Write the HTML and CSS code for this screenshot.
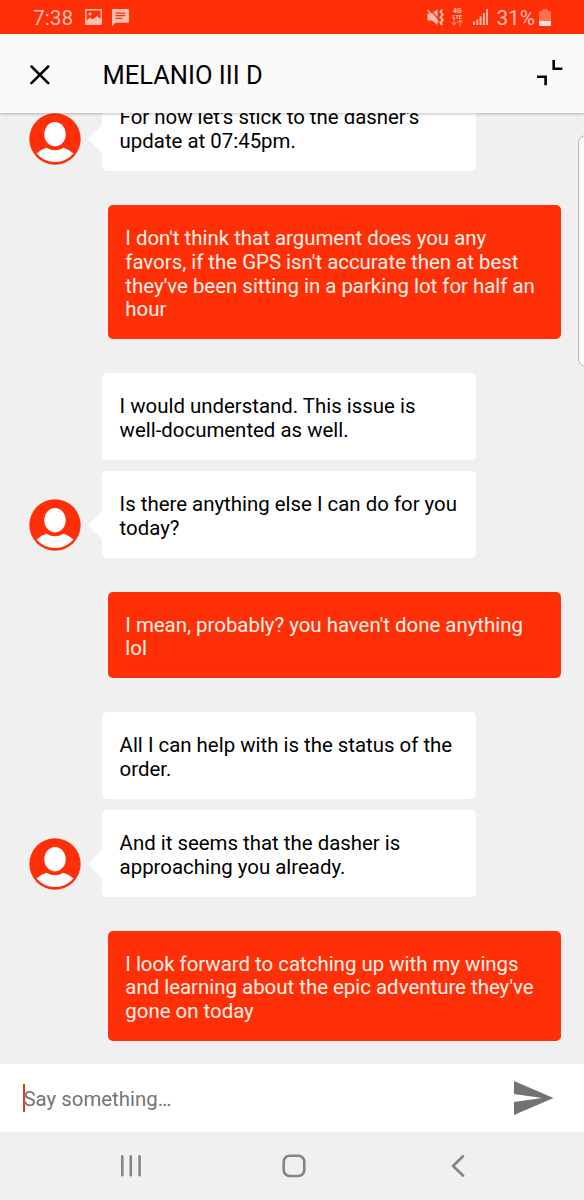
FILE: index.html
```html
<!DOCTYPE html>
<html lang="en">
<head>
    <meta charset="UTF-8">
    <meta name="viewport" content="width=device-width, initial-scale=1.0">
    <title>Support Chat</title>
    <link rel="stylesheet" href="styles.css">
</head>
<body>

    <!-- Avatar shared by the agent messages -->
    <svg class="defs" width="0" height="0">
        <symbol id="avatar" viewBox="0 0 52 52">
            <circle cx="26" cy="26" r="25.7" fill="#ff3008"/>
            <ellipse cx="26" cy="21.2" rx="10.7" ry="12.2" fill="#fff"/>
            <path d="M7.5 40.5Q12 36.5 17.5 34.8Q26 39.8 34.5 34.8Q40 36.5 44.5 40.5Q37 49 26 49Q15 49 7.5 40.5Z" fill="#fff"/>
        </symbol>
    </svg>

    <div class="phone">
        <div class="status-bar">
            <span class="clock">7:38</span>
            <svg class="status-icon" width="17" height="16" viewBox="0 0 17 16">
                <path fill-rule="evenodd" d="M1 0H16Q17 0 17 1V15Q17 16 16 16H1Q0 16 0 15V1Q0 0 1 0ZM1.5 1.5V11.5L5 8.5L7.5 10.5L12 7L15.5 10V1.5ZM3.5 5A1.5 1.5 0 1 0 6.5 5A1.5 1.5 0 1 0 3.5 5Z"/>
            </svg>
            <svg class="status-icon message" width="17" height="17" viewBox="0 0 17 17">
                <path fill-rule="evenodd" d="M1.2 0H15.8Q17 0 17 1.2V12.5Q17 13.7 15.8 13.7H3.5L0 17V1.2Q0 0 1.2 0ZM3.5 3.4V4.7H13.5V3.4ZM3.5 6V7.3H13.5V6ZM3.5 8.7V10H10.5V8.7Z"/>
            </svg>
            <div class="status-right">
                <svg class="status-icon" width="17" height="17" viewBox="0 0 17 17">
                    <path d="M0.5 4.5H4.5L10.5 0.5V16L5 11.5H0.5Z"/>
                    <path d="M2.5 0L12 10.5" stroke="#ff3008" stroke-width="1.3"/>
                    <path d="M0.5 1L11.5 13" stroke="#ffbfb0" stroke-width="1.3"/>
                    <path d="M15 0.5L13.5 3L15.7 5.7L13.5 8.4L15.7 11.1L13.5 13.6L15 16" fill="none" stroke="#ffbfb0" stroke-width="2"/>
                </svg>
                <div class="network">
                    <span>4G</span>
                    <span class="lte">LTE</span>
                    <svg width="12" height="7" viewBox="0 0 12 7">
                        <path d="M3 0V6M0.5 3.5L3 6L5.5 3.5M9 7V1M6.5 3.5L9 1L11.5 3.5" fill="none" stroke="#ff8068" stroke-width="1.2"/>
                    </svg>
                </div>
                <svg class="status-icon signal" width="15" height="16" viewBox="0 0 15 16">
                    <path d="M0 12.5H1.9V16H0ZM3.3 10.5H5.2V16H3.3ZM6.6 7.5H8.5V16H6.6ZM9.9 4H11.8V16H9.9ZM13.1 0H15V16H13.1Z"/>
                </svg>
                <span class="battery-text">31%</span>
                <svg class="battery" width="12" height="17" viewBox="0 0 12 17">
                    <path d="M3.5 0H8.5V2H11Q12 2 12 3V12H0V3Q0 2 1 2H3.5Z" fill="#ff7055"/>
                    <path d="M0 12H12V16Q12 17 11 17H1Q0 17 0 16Z" fill="#ffe0d8"/>
                </svg>
            </div>
        </div>

        <div class="header">
            <svg width="20" height="20" viewBox="0 0 20 20">
                <path d="M1.5 1.5L18.2 18.2M18.2 1.5L1.5 18.2" stroke="#000" stroke-width="2.5" stroke-linecap="round"/>
            </svg>
            <h1>MELANIO III D</h1>
            <svg class="collapse" width="26" height="26" viewBox="0 0 26 26">
                <path d="M16.7 0V8.7H25.3M0 16.8H8.6V25.3" fill="none" stroke="#000" stroke-width="2.6"/>
            </svg>
        </div>

        <div class="chat">
            <div class="row">
                <svg class="avatar"><use href="#avatar"/></svg>
                <div class="bubble agent tail">For now let's stick to the dasher's<br>update at 07:45pm.</div>
            </div>
            <div class="bubble user">I don't think that argument does you any<br>favors, if the GPS isn't accurate then at best<br>they've been sitting in a parking lot for half an<br>hour</div>
            <div class="row">
                <div class="bubble agent">I would understand. This issue is<br>well-documented as well.</div>
            </div>
            <div class="row">
                <svg class="avatar"><use href="#avatar"/></svg>
                <div class="bubble agent tail">Is there anything else I can do for you<br>today?</div>
            </div>
            <div class="bubble user">I mean, probably? you haven't done anything<br>lol</div>
            <div class="row">
                <div class="bubble agent">All I can help with is the status of the<br>order.</div>
            </div>
            <div class="row">
                <svg class="avatar"><use href="#avatar"/></svg>
                <div class="bubble agent tail">And it seems that the dasher is<br>approaching you already.</div>
            </div>
            <div class="bubble user">I look forward to catching up with my wings<br>and learning about the epic adventure they've<br>gone on today</div>
            <div class="edge-panel"></div>
        </div>

        <div class="composer">
            <span class="placeholder">Say something…</span>
            <svg width="40" height="34" viewBox="0 0 40 34">
                <path d="M0 0L39.5 17L0 34V21L28 17L0 13Z" fill="#737373"/>
            </svg>
        </div>

        <div class="nav-bar">
            <svg width="22" height="22" viewBox="0 0 22 22">
                <path d="M2.3 1.3V20.3M10.8 1.3V20.3M19.6 1.3V20.3"/>
            </svg>
            <svg width="24" height="24" viewBox="0 0 24 24">
                <rect x="1.7" y="1.7" width="20.6" height="20.3" rx="6"/>
            </svg>
            <svg width="14" height="22" viewBox="0 0 14 22">
                <path d="M12 1.3L2 11L12 20.5"/>
            </svg>
        </div>
    </div>

</body>
</html>
```

FILE: styles.css
```css
* {
    box-sizing: border-box;
}
body {
    margin: 0;
    font-family: Roboto, "Liberation Sans", sans-serif;
    background-color: #f0f0f0;
}
.defs {
    position: absolute;
}
.phone {
    width: 584px;
    height: 1200px;
    display: flex;
    flex-direction: column;
    overflow: hidden;
}
.status-bar {
    height: 34px;
    flex-shrink: 0;
    display: flex;
    align-items: center;
    padding: 0 33px 0 33px;
    background-color: #ff3008;
    color: #ffbfb0;
    font-size: 20.8px;
}
.clock {
    width: 52px;
    padding-top: 2px;
}
.status-icon {
    fill: #ffbfb0;
}
.message {
    margin-left: 10px;
}
.status-right {
    margin-left: auto;
    display: flex;
    align-items: center;
}
.network {
    width: 12px;
    margin-left: 7px;
    display: flex;
    flex-direction: column;
    align-items: center;
    font-size: 7px;
    font-weight: bold;
    line-height: 6px;
}
.lte {
    font-size: 6px;
    line-height: 5px;
}
.signal {
    margin: 0 8px 0 10px;
}
.battery-text {
    padding-top: 2px;
}
.battery {
    margin-left: 4px;
}
.header {
    height: 79px;
    flex-shrink: 0;
    display: flex;
    align-items: center;
    padding: 2px 21px 0 30px;
    background-color: #fafafa;
    box-shadow: 0 1px 3px rgba(0, 0, 0, 0.25);
    z-index: 1;
}
.header h1 {
    margin: 0 0 0 52.5px;
    font-size: 25.5px;
    font-weight: normal;
}
.collapse {
    margin-left: auto;
    margin-bottom: 3px;
}
.chat {
    position: relative;
    flex: 1;
    min-height: 0;
    display: flex;
    flex-direction: column;
    justify-content: flex-end;
    padding: 0 23px 22.5px 29px;
    overflow: hidden;
}
.row {
    display: flex;
    align-items: flex-end;
    justify-content: flex-start;
}
.row + .row {
    margin-top: 11.5px;
}
.avatar {
    width: 52px;
    height: 52px;
    margin: 0 -52px 6.5px 0;
}
.bubble {
    flex-shrink: 0;
    padding: 21.7px 17.3px 17.1px;
    border-radius: 5px;
    font-size: 20.42px;
    line-height: 23.8px;
    white-space: nowrap;
}
.agent {
    position: relative;
    width: 374px;
    margin-left: 73.3px;
    background-color: #fff;
    color: #000;
}
.tail::before {
    content: "";
    position: absolute;
    left: -14px;
    bottom: 18.5px;
    border-style: solid;
    border-width: 14.5px 14.5px 14.5px 0;
    border-color: transparent #fff transparent transparent;
}
.user {
    width: 453px;
    margin: 34.2px 0 34.2px auto;
    background-color: #ff3008;
    color: #fff0e9;
}
.user:nth-last-child(2) {
    margin-bottom: 0;
}
.edge-panel {
    position: absolute;
    top: 22px;
    right: -10px;
    width: 16px;
    height: 232px;
    border: 1px solid #b5b5b5;
    border-radius: 8px;
    background-color: #fafafa;
}
.composer {
    height: 68.5px;
    flex-shrink: 0;
    display: flex;
    align-items: center;
    justify-content: space-between;
    padding: 0 30px 0 23px;
    background-color: #fff;
}
.placeholder {
    height: 28px;
    border-left: 2.5px solid #e03a1c;
    color: #757575;
    font-size: 20.4px;
    line-height: 31px;
    text-indent: -1.5px;
}
.nav-bar {
    height: 68px;
    flex-shrink: 0;
    display: flex;
    align-items: center;
    gap: 151px;
    padding-left: 120px;
    background-color: #f0f0f0;
}
.nav-bar svg {
    fill: none;
    stroke: #858585;
    stroke-width: 2.6;
    stroke-linecap: round;
    stroke-linejoin: round;
}
.nav-bar svg:nth-child(2) {
    margin: 0 -6px 0 -11px;
}
```
